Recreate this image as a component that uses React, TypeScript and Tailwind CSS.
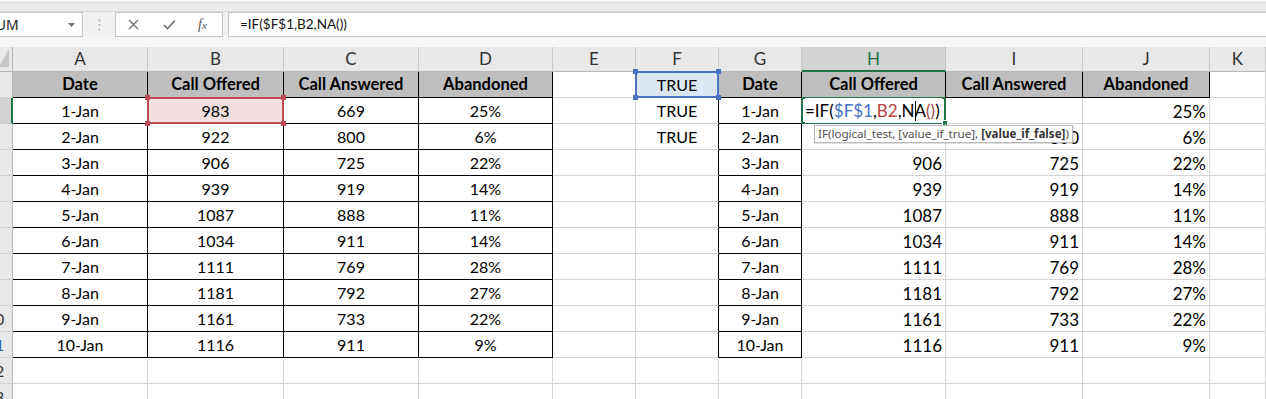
import React from "react";

const dates = ["1-Jan", "2-Jan", "3-Jan", "4-Jan", "5-Jan", "6-Jan", "7-Jan", "8-Jan", "9-Jan", "10-Jan"];
const offered = [983, 922, 906, 939, 1087, 1034, 1111, 1181, 1161, 1116];
const answered = [669, 800, 725, 919, 888, 911, 769, 792, 733, 911];
const abandoned = [25, 6, 22, 14, 11, 14, 28, 27, 22, 9];

const COLS = ["A", "B", "C", "D", "E", "F", "G", "H", "I", "J", "K"];

type Spec = {
  content?: React.ReactNode;
  align?: "c" | "r";
  bold?: boolean;
  big?: boolean;
  fill?: string;
  rb?: boolean;
  bb?: boolean;
  overlay?: React.ReactNode;
  z?: boolean;
};

function Handle({ pos, color }: { pos: string; color: string }) {
  return <span className={`absolute w-[5px] h-[5px] ${pos} ${color}`} />;
}

function RefBox({ border, handle }: { border: string; handle: string }) {
  return (
    <div className={`pointer-events-none absolute -left-px -top-px right-[-1px] bottom-[-1px] border-2 ${border}`}>
      <Handle pos="-left-[4px] -top-[4px]" color={handle} />
      <Handle pos="-right-[4px] -top-[4px]" color={handle} />
      <Handle pos="-left-[4px] -bottom-[4px]" color={handle} />
      <Handle pos="-right-[4px] -bottom-[4px]" color={handle} />
    </div>
  );
}

function ActiveBox() {
  return (
    <div className="pointer-events-none absolute -left-px -top-px right-[-1px] bottom-[-1px] border-2 border-[#217346]">
      <span className="absolute -right-[4px] -bottom-[4px] w-[6px] h-[6px] bg-[#217346] border border-white" />
    </div>
  );
}

function EditingFormula() {
  return (
    <span className="absolute left-[3px] top-0 h-full flex items-center whitespace-nowrap text-[17px] z-20 bg-white pr-[2px]">
      <span>=IF(</span>
      <span className="text-[#3e73c4]">$F$1</span>
      <span>,</span>
      <span className="text-[#b8423f]">B2</span>
      <span>,N</span>
      <span className="inline-block w-px h-[20px] bg-black -mr-px" />
      <span>A</span>
      <span className="text-[#a43f4a]">()</span>
      <span>)</span>
    </span>
  );
}

function Tooltip() {
  return (
    <div className="absolute left-[12px] top-[1px] z-30 whitespace-nowrap bg-white border border-[#b9b9b9] shadow-[1px_1px_1px_rgba(0,0,0,0.12)] px-[3px] h-[18px] flex items-center text-[11.6px] text-[#505050] font-['Noto_Sans',sans-serif]">
      IF(logical_test, [value_if_true],&nbsp;<b className="text-[#333]">[value_if_false]</b>)
    </div>
  );
}

function cellFor(r: number, c: number): Spec {
  const i = r - 2;
  const inData = r >= 2 && r <= 11;
  const inTable = r >= 1 && r <= 11;
  const hdr = "bg-[#bfbfbf]";
  switch (c) {
    case 0:
      return r === 1
        ? { content: "Date", bold: true, fill: hdr, rb: true, bb: true }
        : inData
        ? { content: dates[i], rb: true, bb: true }
        : {};
    case 1:
      if (r === 1) return { content: "Call Offered", bold: true, fill: hdr, rb: true, bb: true };
      if (r === 2)
        return {
          content: offered[i],
          rb: true,
          bb: true,
          fill: "bg-[#f3dfdf]",
          overlay: <RefBox border="border-[#bd4b52]" handle="bg-[#bd4b52]" />,
          z: true,
        };
      return inData ? { content: offered[i], rb: true, bb: true } : {};
    case 2:
      return r === 1
        ? { content: "Call Answered", bold: true, fill: hdr, rb: true, bb: true }
        : inData
        ? { content: answered[i], rb: true, bb: true }
        : {};
    case 3:
      return r === 1
        ? { content: "Abandoned", bold: true, fill: hdr, rb: true, bb: true }
        : inData
        ? { content: `${abandoned[i]}%`, rb: true, bb: true }
        : {};
    case 4:
      return {};
    case 5:
      if (r === 1)
        return {
          content: "TRUE",
          rb: true,
          fill: "bg-[#dde7f4]",
          overlay: <RefBox border="border-[#4773c2]" handle="bg-[#4773c2]" />,
          z: true,
        };
      if (r === 2 || r === 3) return { content: "TRUE", rb: true };
      return inTable ? { rb: true } : {};
    case 6:
      return r === 1
        ? { content: "Date", bold: true, fill: hdr, rb: true, bb: true }
        : inData
        ? { content: dates[i], rb: true, bb: true }
        : {};
    case 7:
      if (r === 1) return { content: "Call Offered", bold: true, fill: hdr, rb: true, bb: true };
      if (r === 2) return { overlay: <><EditingFormula /><ActiveBox /></>, z: true };
      if (r === 3) return { overlay: <Tooltip />, z: true };
      return inData ? { content: offered[i], align: "r", big: true } : {};
    case 8:
      if (r === 1) return { content: "Call Answered", bold: true, fill: hdr, rb: true, bb: true };
      if (r === 2) return {};
      return inData ? { content: answered[i], align: "r", big: true } : {};
    case 9:
      if (r === 1) return { content: "Abandoned", bold: true, fill: hdr, rb: true, bb: true };
      return inData ? { content: `${abandoned[i]}%`, align: "r", big: true } : {};
    default:
      return {};
  }
}

function Cell({ s }: { s: Spec }) {
  const right = s.rb ? "border-r-black" : "border-r-[#d4d4d4]";
  const bottom = s.bb ? "border-b-black" : "border-b-[#d4d4d4]";
  const align = s.align === "r" ? "justify-end pr-[3px]" : "justify-center";
  const size = s.big ? "text-[17px] pt-[2px]" : s.bold ? "text-[16.5px]" : "text-[16px]";
  return (
    <div
      className={`relative flex items-center border-r border-b ${right} ${bottom} ${align} ${size} ${
        s.bold ? "font-bold" : ""
      } ${s.fill ?? ""} ${s.z ? "z-10" : ""} whitespace-nowrap`}
    >
      {s.content}
      {s.overlay}
    </div>
  );
}

function RowHeader({ r }: { r: number }) {
  const active = r === 2;
  return (
    <div
      className={`relative overflow-hidden border-b border-b-[#d0d0d0] ${
        active ? "bg-[#d3d3d3] border-r-2 border-r-[#217346]" : "bg-[#e8e8e8] border-r border-r-[#b8b8b8]"
      } text-[16px] ${r === 11 ? "text-[#2a64b0]" : "text-[#333]"}`}
    >
      {/* the header is wider than the visible strip; only its right edge shows */}
      <span className="absolute left-[-20px] top-0 h-full w-[30px] flex items-center justify-center">{r}</span>
    </div>
  );
}

function ColumnHeaders() {
  return (
    <>
      <div className="relative bg-[#e8e8e8] border-r border-r-[#b8b8b8] border-b border-b-[#b8b8b8]">
        <svg className="absolute right-[3px] bottom-[4px]" width="10" height="18" viewBox="0 0 10 18">
          <polygon points="10,0 10,18 0,18" fill="#c6c6c6" />
        </svg>
      </div>
      {COLS.map((c) =>
        c === "H" ? (
          <div
            key={c}
            className="flex items-center justify-center bg-[#d3d3d3] border-r border-r-[#c3c3c3] border-b-2 border-b-[#217346] text-[#217346] text-[17px]"
          >
            {c}
          </div>
        ) : (
          <div
            key={c}
            className="flex items-center justify-center bg-[#e8e8e8] border-r border-r-[#c9c9c9] border-b border-b-[#b8b8b8] text-[#333] text-[17px]"
          >
            {c}
          </div>
        )
      )}
    </>
  );
}

function Sheet() {
  const rows = Array.from({ length: 13 }, (_, k) => k + 1);
  return (
    <div className="grid grid-cols-[13px_135px_136px_135px_134px_83px_83px_83px_144px_137px_127px_56px] grid-rows-[25px_repeat(13,26px)]">
      <ColumnHeaders />
      {rows.map((r) => (
        <React.Fragment key={r}>
          <RowHeader r={r} />
          {COLS.map((_, c) => (
            <Cell key={c} s={cellFor(r, c)} />
          ))}
        </React.Fragment>
      ))}
    </div>
  );
}

function FormulaBar() {
  return (
    <div className="h-[25px] flex bg-[#f1f1f1]">
      <div className="relative w-[83px] h-full bg-white border border-l-0 border-[#c6c6c6] overflow-hidden flex items-center">
        <span className="-ml-[12px] text-[14px] text-[#222] font-['Noto_Sans',sans-serif]">SUM</span>
        <svg className="absolute right-[7px] top-[10px]" width="7" height="4" viewBox="0 0 7 4">
          <polygon points="0,0 7,0 3.5,4" fill="#6d6d6d" />
        </svg>
      </div>
      <div className="w-[32px] flex items-center justify-center">
        <svg width="3" height="12" viewBox="0 0 3 12">
          <circle cx="1.5" cy="1.5" r="1" fill="#b0b0b0" />
          <circle cx="1.5" cy="6" r="1" fill="#b0b0b0" />
          <circle cx="1.5" cy="10.5" r="1" fill="#b0b0b0" />
        </svg>
      </div>
      <div className="w-[108px] h-full bg-white border border-[#c6c6c6] flex items-center">
        <svg className="ml-[12px]" width="11" height="11" viewBox="0 0 11 11">
          <path d="M1 1 L10 10 M10 1 L1 10" stroke="#6e6e6e" strokeWidth="1.4" fill="none" />
        </svg>
        <svg className="ml-[24px]" width="13" height="11" viewBox="0 0 13 11">
          <path d="M1 6 L4.5 9.5 L12 1.5" stroke="#6e6e6e" strokeWidth="1.6" fill="none" />
        </svg>
        <span className="ml-[22px] text-[14px] italic text-[#555] font-['Liberation_Serif',serif] leading-none">
          f<span className="text-[11px]">x</span>
        </span>
      </div>
      <div className="ml-[5px] flex-1 h-full bg-white border border-r-0 border-[#c6c6c6] flex items-center pl-[11px] text-[13.5px] text-[#111]">
        =IF($F$1,B2,NA())
      </div>
    </div>
  );
}

function Ribbon() {
  return (
    <div className="h-[12px] bg-[#ececec] border-b border-[#d6d6d6]">
      <div className="h-[3px] bg-[#f6f6f6] border-b border-[#dedede]" />
    </div>
  );
}

export default function App() {
  return (
    <div className="w-[1266px] h-[399px] overflow-hidden bg-white text-black font-['Lato',sans-serif]">
      <Ribbon />
      <FormulaBar />
      <div className="h-[10px] bg-[#f6f6f6]" />
      <Sheet />
    </div>
  );
}
